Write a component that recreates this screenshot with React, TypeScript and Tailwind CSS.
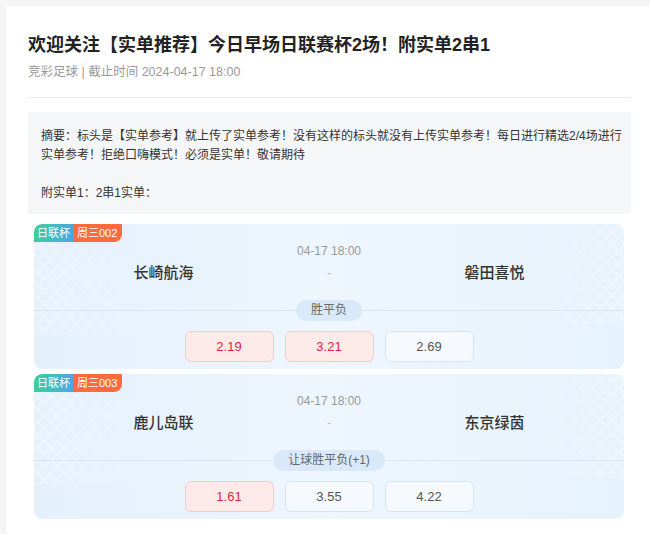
import React from "react";

type Match = {
  league: string;
  code: string;
  time: string;
  home: string;
  away: string;
  play: string;
  odds: { value: string; picked: boolean }[];
};

const matches: Match[] = [
  {
    league: "日联杯",
    code: "周三002",
    time: "04-17 18:00",
    home: "长崎航海",
    away: "磐田喜悦",
    play: "胜平负",
    odds: [
      { value: "2.19", picked: true },
      { value: "3.21", picked: true },
      { value: "2.69", picked: false },
    ],
  },
  {
    league: "日联杯",
    code: "周三003",
    time: "04-17 18:00",
    home: "鹿儿岛联",
    away: "东京绿茵",
    play: "让球胜平负(+1)",
    odds: [
      { value: "1.61", picked: true },
      { value: "3.55", picked: false },
      { value: "4.22", picked: false },
    ],
  },
];

function MatchCard({ match }: { match: Match }) {
  return (
    <div className="relative overflow-hidden rounded-[8px] bg-linear-to-r from-[#e4f0fb] via-[#eef6fe] to-[#e6f2fc] pt-[18px] pb-[7px]">
      {/* faint lattice on the sides */}
      <div className="pointer-events-none absolute left-0 top-[20px] h-[90px] w-[110px] opacity-35 bg-[repeating-linear-gradient(45deg,rgba(255,255,255,0.8)_0px,rgba(255,255,255,0.8)_3px,transparent_3px,transparent_9px),repeating-linear-gradient(-45deg,rgba(255,255,255,0.8)_0px,rgba(255,255,255,0.8)_3px,transparent_3px,transparent_9px)] [mask-image:linear-gradient(to_right,black,transparent)]" />
      <div className="pointer-events-none absolute right-0 top-0 h-[100px] w-[100px] opacity-35 bg-[repeating-linear-gradient(45deg,rgba(255,255,255,0.8)_0px,rgba(255,255,255,0.8)_3px,transparent_3px,transparent_9px),repeating-linear-gradient(-45deg,rgba(255,255,255,0.8)_0px,rgba(255,255,255,0.8)_3px,transparent_3px,transparent_9px)] [mask-image:linear-gradient(to_left,black,transparent)]" />

      <div className="absolute left-0 top-0 flex overflow-hidden rounded-tl-[8px] rounded-br-[8px] text-[11px] leading-[18px] text-white">
        <span className="bg-linear-to-r from-[#3ecf98] to-[#4ca7e2] px-[3px]">{match.league}</span>
        <span className="bg-[#ff6b3d] pl-[4px] pr-[5px]">{match.code}</span>
      </div>

      <div className="relative text-center text-[12px] leading-[18px] text-[#999]">{match.time}</div>

      <div className="relative mt-[2px] grid h-[22px] grid-cols-[1fr_80px_1fr] items-center px-[4px]">
        <div className="text-center text-[15px] font-medium text-[#333]">{match.home}</div>
        <div className="text-center text-[12px] text-[#bbb]">-</div>
        <div className="text-center text-[15px] font-medium text-[#333]">{match.away}</div>
      </div>

      <div className="relative mt-[16px] flex h-[21px] items-center">
        <div className="h-px flex-1 bg-[#d8e6f4]" />
        <div className="rounded-full bg-[#d9e9fa] px-[15px] text-[12px] leading-[21px] text-[#666]">{match.play}</div>
        <div className="h-px flex-1 bg-[#d8e6f4]" />
      </div>

      <div className="relative mt-[10px] flex justify-center gap-[11px]">
        {match.odds.map((o, i) => (
          <div
            key={i}
            className={
              o.picked
                ? "flex h-[31px] w-[89px] items-center justify-center rounded-[6px] border border-[#f6caca] bg-[#ffeaea] text-[13px] text-[#e2263c]"
                : "flex h-[31px] w-[89px] items-center justify-center rounded-[6px] border border-[#d6e4f2] bg-[#f6faff] text-[13px] text-[#555]"
            }
          >
            {o.value}
          </div>
        ))}
      </div>
    </div>
  );
}

export default function App() {
  return (
    <main className="min-h-screen bg-[#f5f5f5] pl-[6px] pt-[6px] font-['Liberation_Sans','Noto_Sans_CJK_SC',sans-serif]">
      <div className="min-h-[528px] bg-white pl-[22px] pr-[19px] pt-[26px]">
        <h1 className="text-[18px] font-bold leading-[26px] text-[#222]">
          欢迎关注【实单推荐】今日早场日联赛杯2场！附实单2串1
        </h1>
        <p className="mt-[4px] text-[12.5px] leading-[20px] text-[#999]">
          竞彩足球 | 截止时间 2024-04-17 18:00
        </p>

        <div className="mt-[15px] h-px bg-[#ebebeb]" />

        <div className="mt-[14px] bg-[#f5f6f8] pl-[13px] pr-[8px] pt-[15px] pb-[11px] text-[12px] leading-[19px] text-[#333]">
          <span className="block whitespace-nowrap">
            摘要：标头是【实单参考】就上传了实单参考！没有这样的标头就没有上传实单参考！每日进行精选2/4场进行
          </span>
          <span className="block whitespace-nowrap">实单参考！拒绝口嗨模式！必须是实单！敬请期待</span>
          <span className="mt-[19px] block">附实单1：2串1实单：</span>
        </div>

        <div className="ml-[6px] mr-[7px] mt-[10px] flex flex-col gap-[5px]">
          {matches.map((m) => (
            <MatchCard key={m.code} match={m} />
          ))}
        </div>
      </div>
    </main>
  );
}
